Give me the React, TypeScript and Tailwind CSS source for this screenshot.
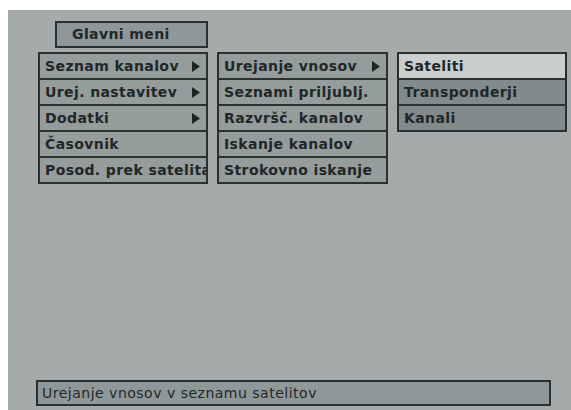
import React from 'react';

type Item = { label: string; arrow?: boolean; tone?: 'normal' | 'selected' | 'dark' };

const mainMenu: Item[] = [
  { label: 'Seznam kanalov', arrow: true },
  { label: 'Urej. nastavitev', arrow: true },
  { label: 'Dodatki', arrow: true },
  { label: 'Časovnik' },
  { label: 'Posod. prek satelita' },
];

const subMenu: Item[] = [
  { label: 'Urejanje vnosov', arrow: true },
  { label: 'Seznami priljublj.' },
  { label: 'Razvršč. kanalov' },
  { label: 'Iskanje kanalov' },
  { label: 'Strokovno iskanje' },
];

const subSubMenu: Item[] = [
  { label: 'Sateliti', tone: 'selected' },
  { label: 'Transponderji', tone: 'dark' },
  { label: 'Kanali', tone: 'dark' },
];

function Arrow() {
  return (
    <svg width="8" height="11" viewBox="0 0 8 11" className="shrink-0">
      <path d="M0 0 L8 5.5 L0 11 Z" fill="#1c2424" />
    </svg>
  );
}

function Menu({ items, width }: { items: Item[]; width: string }) {
  return (
    <div className={`${width} border-2 border-[#283030] bg-[#283030] flex flex-col gap-[2px]`}>
      {items.map((item) => (
        <div
          key={item.label}
          className={
            'h-[24px] flex items-center justify-between gap-1 pl-[5px] pr-[6px] overflow-hidden whitespace-nowrap ' +
            (item.tone === 'selected'
              ? 'bg-[#c9cece]'
              : item.tone === 'dark'
                ? 'bg-[#818b8b]'
                : 'bg-[#949c9c]')
          }
        >
          <span>{item.label}</span>
          {item.arrow && <Arrow />}
        </div>
      ))}
    </div>
  );
}

export default function App() {
  return (
    <div className="w-[571px] h-[410px] bg-white pl-[8px] pt-[10px] overflow-hidden">
      <div
        className="w-[563px] h-[400px] bg-[#a5abab] flex flex-col text-[14px] font-bold tracking-[0.4px] text-[#1f2727]"
        style={{ fontFamily: '"DejaVu Sans", Verdana, sans-serif' }}
      >
        <div className="ml-[47px] mt-[11px] w-[153px] h-[27px] border-2 border-[#283030] bg-[#8f9898] flex items-center pl-[15px]">
          Glavni meni
        </div>
        <div className="flex items-start gap-[9px] ml-[30px] mt-[4px]">
          <Menu items={mainMenu} width="w-[170px]" />
          <Menu items={subMenu} width="w-[171px]" />
          <Menu items={subSubMenu} width="w-[170px]" />
        </div>
        <div className="flex-1" />
        <div className="ml-[28px] mb-[4px] w-[515px] h-[26px] border-2 border-[#283030] bg-[#8f9898] flex items-center pl-[4px] font-normal tracking-[0.5px]">
          Urejanje vnosov v seznamu satelitov
        </div>
      </div>
    </div>
  );
}
